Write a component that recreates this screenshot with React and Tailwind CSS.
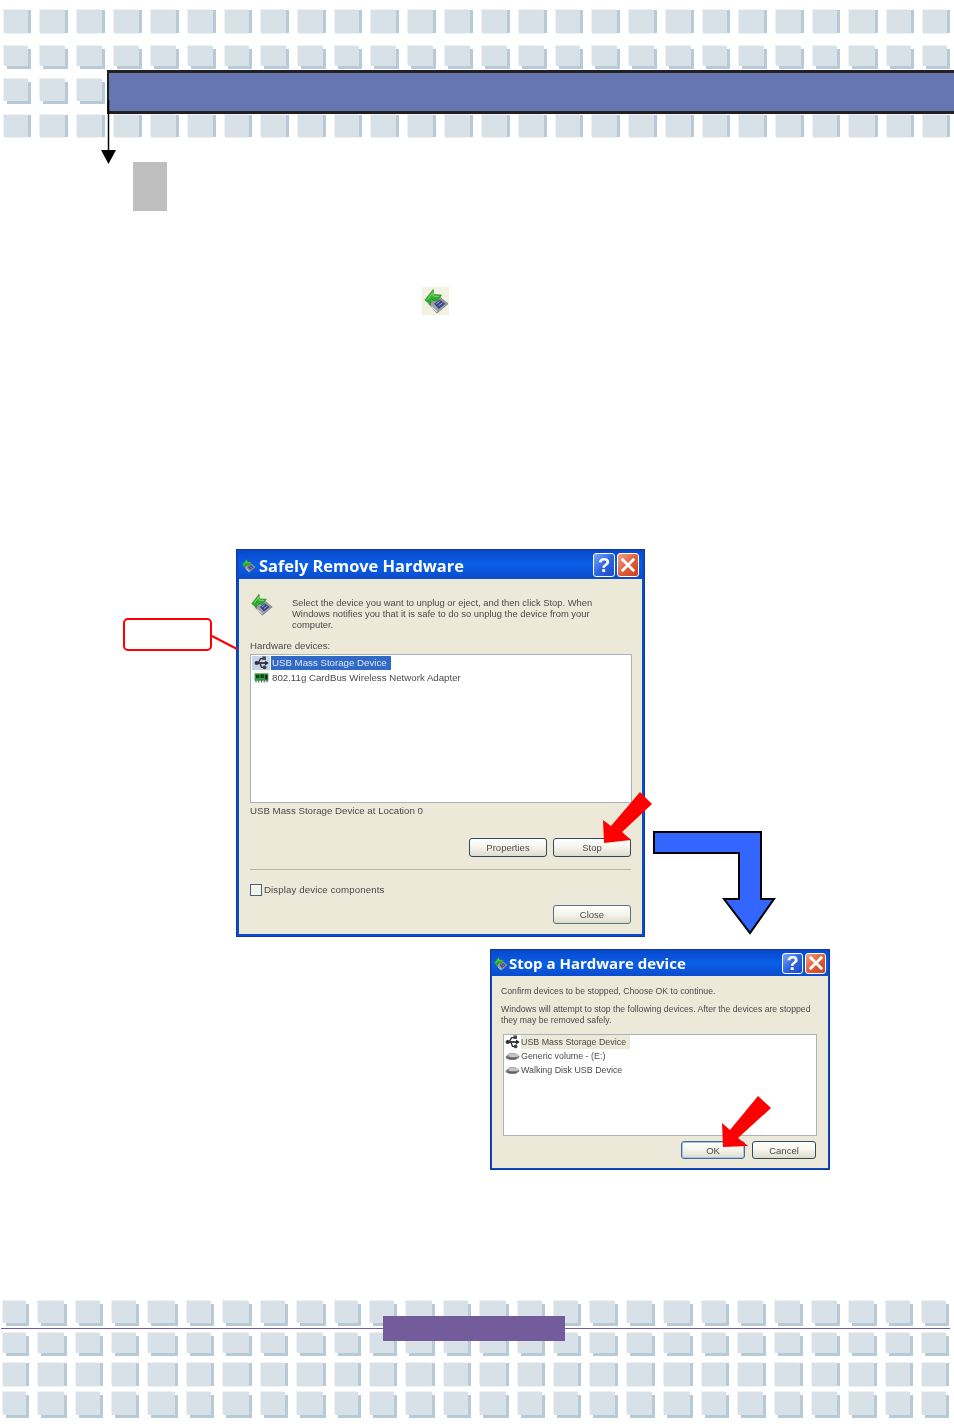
const TOP_X = [4,40,77,114,151,188,225,261,298,335,371,408,445,482,519,556,592,629,666,703,739,776,813,849,887,923];
const BOT_X = [3,38,76,112,148,187,223,261,297,335,370,406,444,480,518,554,590,627,664,702,738,775,812,849,886,922];

function TileRow({ xs, height, full, className = "" }) {
  return (
    <div className={"flex " + className} style={{ height }}>
      {xs.map((x, i) => {
        const next = i + 1 < xs.length ? xs[i + 1] : x + 36;
        return (
          <div
            key={x}
            style={{ marginLeft: i === 0 ? x : 9, width: next - x - 12, height: height - (full ? 3 : 0) }}
            className={
              full
                ? "shrink-0 bg-[#d8e1e8] shadow-[3px_3px_0_#b6cad8,-1px_-1px_0_#edf1f4] mr-[3px]"
                : "shrink-0 bg-[#d8e1e8] shadow-[3px_0_0_#b6cad8,-1px_-1px_0_#edf1f4,0_1px_0_#edf1f4] mr-[3px]"
            }
          />
        );
      })}
    </div>
  );
}

function EjectIcon({ className }) {
  return (
    <svg viewBox="0 0 28 28" className={className}>
      <path d="M6 17 L17 9 L27 17 L15 27 Z" fill="#9a9fa8" stroke="#6b707a" strokeWidth="0.8" />
      <path d="M12 17 L18 12.5 L24 17 L17 22.5 Z" fill="#3a4a86" />
      <path d="M14.5 17 L18 14.5 M17 19 L21 16" stroke="#b9c4e0" strokeWidth="0.9" />
      <path d="M9 20 L15 25.5" stroke="#e6e7ea" strokeWidth="1.2" />
      <path d="M2 13 L11 1.5 L11.5 7 L20 7.5 L15 14 L9 13 L8 18 Z" fill="#2fae2c" stroke="#1b7f22" strokeWidth="0.6" />
      <path d="M5 12.5 L10.5 5 L11 8.7 L17 9" fill="none" stroke="#8fe07f" strokeWidth="1" />
    </svg>
  );
}

function UsbIcon({ className }) {
  return (
    <svg viewBox="0 0 16 16" className={className}>
      <path d="M2 8 H15" stroke="#2c2c2c" strokeWidth="2" />
      <path d="M16 8 L12 5 V11 Z" fill="#2c2c2c" />
      <circle cx="2.5" cy="8" r="2.4" fill="#333" />
      <path d="M4 8 L7 3 H10 M6 8 L8 13 H11" fill="none" stroke="#333" strokeWidth="1.6" />
      <rect x="9" y="0.5" width="4" height="4" fill="#444" />
      <circle cx="11.5" cy="13" r="2.2" fill="#444" />
    </svg>
  );
}

function CardIcon({ className }) {
  return (
    <svg viewBox="0 0 16 12" className={className}>
      <rect x="0.5" y="1.5" width="15" height="8" fill="#2a9a3c" />
      <rect x="2" y="3" width="3.5" height="3.5" fill="#123d1e" />
      <rect x="7" y="2.5" width="3.5" height="4" fill="#123d1e" />
      <rect x="12" y="3" width="2.5" height="5" fill="#1d1d1d" />
      <path d="M2 9 V11.5 M5 9 V11.5 M8 9 V11.5 M11 9 V11.5 M14 9 V11.5" stroke="#444" />
    </svg>
  );
}

function DiskIcon({ className }) {
  return (
    <svg viewBox="0 0 16 10" className={className}>
      <path d="M0.5 5 L5 1.5 H11 L15.5 4.5 V6 L11 9 H5 L0.5 7 Z" fill="#7f7f7f" />
      <ellipse cx="9" cy="4" rx="5.5" ry="2.2" fill="#c4c4c4" />
      <path d="M2 6.8 H13" stroke="#4d4d4d" strokeWidth="1" />
    </svg>
  );
}

function TitleBar({ title, heightClass, textClass, gapClass, btnClass, btnGroupClass }) {
  return (
    <div className={"flex items-center bg-linear-to-b from-[#0848c8] via-[#0a5ee8] to-[#0a4ccc] " + heightClass}>
      <EjectIcon className={"w-[15px] h-[15px] shrink-0 " + gapClass} />
      <span className={"text-white font-bold whitespace-nowrap font-['Open_Sans',sans-serif] " + textClass}>{title}</span>
      <div className={"ml-auto flex gap-[2px] " + btnGroupClass}>
        <div className={"flex items-center justify-center rounded-[3px] border border-white bg-linear-to-br from-[#7fa6f2] via-[#2f66e0] to-[#1c49c4] text-white font-bold text-[20px] leading-none font-['Liberation_Sans',sans-serif] " + btnClass}>?</div>
        <div className={"flex items-center justify-center rounded-[3px] border border-white bg-linear-to-br from-[#f0a287] via-[#e0603a] to-[#c8401c] " + btnClass}>
          <svg viewBox="0 0 12 12" className="w-[14px] h-[14px]">
            <path d="M1.5 1.5 L10.5 10.5 M10.5 1.5 L1.5 10.5" stroke="#fff" strokeWidth="2.4" strokeLinecap="square" />
          </svg>
        </div>
      </div>
    </div>
  );
}

function XpButton({ children, className = "" }) {
  return (
    <div className={"flex items-center justify-center rounded-[3px] border border-[#2c4a64] bg-linear-to-b from-white via-[#f5f4ec] to-[#dedbc9] text-[#4a4a4a] text-[9.5px] " + className}>
      {children}
    </div>
  );
}

export default function App() {
  return (
    <div className="relative w-[954px] h-[1426px] bg-white overflow-hidden flex flex-col font-['Liberation_Sans',Arial,sans-serif]">
      {/* top tile band */}
      <div className="pt-[10px]">
        <TileRow xs={TOP_X} height={23} />
        <TileRow xs={TOP_X} height={23} full className="mt-[13px]" />
        <TileRow xs={TOP_X} height={25} full className="mt-[10px]" />
        <TileRow xs={TOP_X} height={22} className="mt-[11px]" />
      </div>

      <div className="ml-[133px] mt-[25px] w-[34px] h-[49px] bg-[#bfbfbf]" />

      <div className="ml-[422px] mt-[76px] w-[27px] h-[28px] bg-[#f3f1e2] flex items-center justify-center">
        <EjectIcon className="w-[26px] h-[26px]" />
      </div>

      {/* first dialog */}
      <div className="ml-[236px] mt-[234px] w-[409px] h-[388px] bg-[#0a4ccc] border-[1px] border-[#123a9c] px-[2px] pb-[2px] flex flex-col blur-[0.35px]">
        <TitleBar
          title="Safely Remove Hardware"
          heightClass="h-[29px] shrink-0"
          textClass="text-[16.4px] ml-[3px] mt-[3px]"
          gapClass="ml-[2px] mt-[2px]"
          btnClass="w-[22px] h-[24px]"
          btnGroupClass="mr-[3px]"
        />
        <div className="flex-1 bg-[#ece9d8] pl-[11px] pr-[11px] text-[#4a4a4a] text-[9.7px] leading-[11px] flex flex-col whitespace-nowrap">
          <div className="flex pt-[14px] h-[61px]">
            <EjectIcon className="w-[23px] h-[23px] shrink-0 mr-[19px]" />
            <p className="mt-[4px] text-[9.4px]">
              Select the device you want to unplug or eject, and then click Stop. When<br />
              Windows notifies you that it is safe to do so unplug the device from your<br />
              computer.
            </p>
          </div>
          <div className="leading-[12px]">Hardware devices:</div>
          <div className="mt-[2px] h-[149px] w-[382px] bg-white border border-[#a9b3bc] p-[1px]">
            <div className="flex items-center h-[14px]">
              <div className="w-[18px] h-[14px] bg-[#c5d3ec] flex items-center justify-center mr-px">
                <UsbIcon className="w-[15px] h-[14px] shrink-0" />
              </div>
              <span className="bg-[#316ac5] text-[#dfe7f5] px-[1px] pr-[4px] h-[14px] leading-[14px]">USB Mass Storage Device</span>
            </div>
            <div className="flex items-center h-[14px]">
              <CardIcon className="w-[15px] h-[11px] shrink-0 mx-[2px]" />
              <span className="px-[1px]">802.11g CardBus Wireless Network Adapter</span>
            </div>
          </div>
          <div className="mt-[2px] leading-[12px]">USB Mass Storage Device at Location 0</div>
          <div className="mt-[21px] flex justify-end gap-[6px] w-[381px]">
            <XpButton className="w-[78px] h-[19px]">Properties</XpButton>
            <XpButton className="w-[78px] h-[19px]">Stop</XpButton>
          </div>
          <div className="mt-[12px] h-px w-[381px] bg-[#b5b3a6]" />
          <div className="mt-[14px] flex items-center h-[12px]">
            <div className="w-[12px] h-[12px] bg-[#f4f3ea] border border-[#4a6076] mr-[2px]" />
            <span className="tracking-[0.1px] mt-[-2px]">Display device components</span>
          </div>
          <div className="mt-[9px] flex justify-end w-[381px]">
            <XpButton className="w-[78px] h-[19px] border-[#59738c]">Close</XpButton>
          </div>
        </div>
      </div>

      {/* second dialog */}
      <div className="ml-[490px] mt-[12px] w-[340px] h-[221px] bg-[#0a4ccc] border-[1px] border-[#123a9c] px-[1px] pb-[1px] flex flex-col blur-[0.35px]">
        <TitleBar
          title="Stop a Hardware device"
          heightClass="h-[26px] shrink-0"
          textClass="text-[15px] ml-[1px]"
          gapClass="ml-[1px]"
          btnClass="w-[21px] h-[21px]"
          btnGroupClass="mr-[2px]"
        />
        <div className="flex-1 bg-[#ece9d8] pl-[9px] text-[#4a4a4a] text-[8.7px] leading-[11px] flex flex-col whitespace-nowrap">
          <p className="mt-[10px]">Confirm devices to be stopped, Choose OK to continue.</p>
          <p className="mt-[7px]">
            Windows will attempt to stop the following devices. After the devices are stopped<br />
            they may be removed safely.
          </p>
          <div className="mt-[8px] ml-[2px] w-[314px] h-[102px] bg-white border border-[#a9b3bc] pl-[1px] text-[8.9px]">
            <div className="flex items-center h-[14px]">
              <UsbIcon className="w-[15px] h-[14px] shrink-0 mr-[1px]" />
              <span className="bg-[#ece9d8] pl-[0px] pr-[4px] h-[14px] leading-[14px]">USB Mass Storage Device</span>
            </div>
            <div className="flex items-center h-[14px]">
              <DiskIcon className="w-[15px] h-[9px] shrink-0 mr-[1px]" />
              <span>Generic volume - (E:)</span>
            </div>
            <div className="flex items-center h-[14px]">
              <DiskIcon className="w-[15px] h-[9px] shrink-0 mr-[1px]" />
              <span>Walking Disk USB Device</span>
            </div>
          </div>
          <div className="mt-[5px] ml-[2px] w-[313px] flex justify-end gap-[7px]">
            <XpButton className="w-[64px] h-[18px] border-[#3f6a9c] shadow-[inset_0_0_0_1px_#a9c4e8]">OK</XpButton>
            <XpButton className="w-[64px] h-[18px]">Cancel</XpButton>
          </div>
        </div>
      </div>

      {/* bottom tile band */}
      <div className="mt-auto pb-[8px]">
        <TileRow xs={BOT_X} height={25} full />
        <TileRow xs={BOT_X} height={23} full className="mt-[7px]" />
        <TileRow xs={BOT_X} height={23} className="mt-[7px]" />
        <TileRow xs={BOT_X} height={26} full className="mt-[6px]" />
      </div>

      {/* header bar over the tiles */}
      <div className="absolute left-[107px] right-0 top-[70px] h-[44px] bg-[#6576b0] border-y-[3px] border-l-2 border-[#231f20]" />

      {/* footer line and tab over the tiles */}
      <div className="absolute left-[1px] right-[4px] top-[1328px] h-px bg-[#745c9c]" />
      <div className="absolute left-[383px] top-[1316px] w-[182px] h-[25px] bg-[#735c9c]" />

      {/* callout over the page */}
      <div className="absolute left-[123px] top-[618px] w-[89px] h-[33px] rounded-[5px] border-2 border-[#ff0000] bg-white" />

      {/* arrows over the page */}
      <svg className="absolute left-0 top-0 w-[954px] h-[1426px] pointer-events-none" viewBox="0 0 954 1426">
        <path d="M108.5 100 V152" stroke="#000" strokeWidth="1.5" />
        <path d="M101 150 H116 L108.5 164 Z" fill="#000" />
        <path d="M212 636 L237 649" stroke="#ff0000" strokeWidth="2" />
        <path d="M604 843 L603 820 L611 826 L640 792 L652 804 L622 832 L631 840 Z" fill="#ff0000" />
        <path d="M723 1147 L722 1123 L730 1130 L758 1096 L771 1108 L738 1138 L748 1146 Z" fill="#ff0000" />
        <path d="M654 832 H761 V899 H774 L750 933 L724 899 H739 V853 H654 Z" fill="#3366ff" stroke="#000" strokeWidth="2" />
      </svg>
    </div>
  );
}
